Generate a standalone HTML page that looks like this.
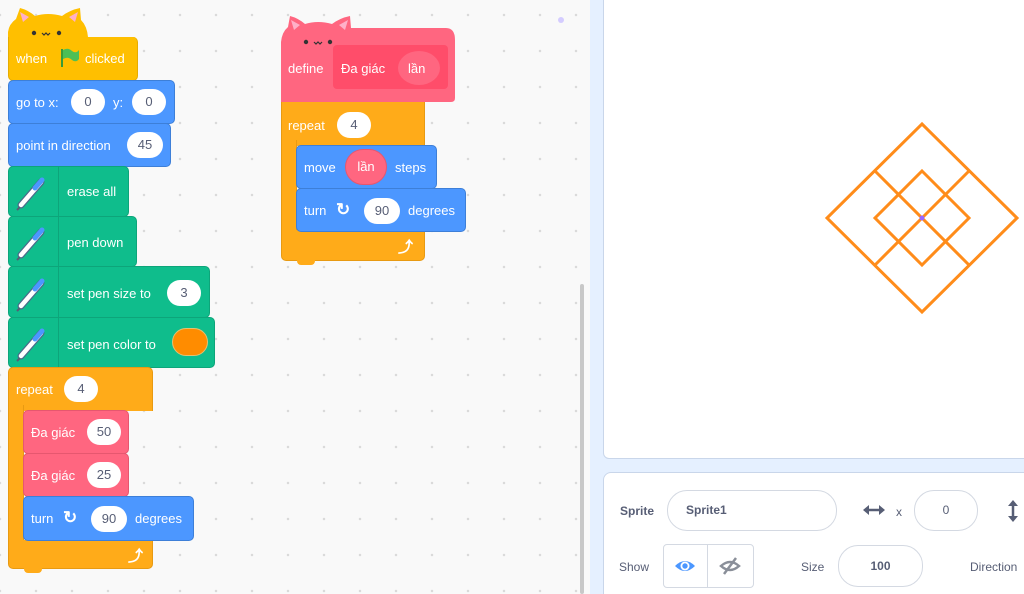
<!DOCTYPE html>
<html style="overflow:hidden;height:594px"><head><meta charset="utf-8">
<style>
*{box-sizing:border-box;margin:0;padding:0}
body{width:1024px;height:594px;overflow:hidden;position:relative;background:#e5f0ff;font-family:"Liberation Sans",sans-serif}
#code{position:absolute;left:0;top:0;width:590px;height:594px;background-color:#f9f9f9;
background-image:radial-gradient(circle,#d9d9d9 1px,transparent 1.5px);background-size:36px 36px;background-position:-18px -3px}
.b{position:absolute;border-radius:5px;color:#fff;font-size:13px;white-space:nowrap}
.in{position:absolute;background:#fff;border-radius:14px;color:#575e75;font-size:13px;text-align:center;transform:translateY(-50%);height:26px;line-height:26px}
.tab{position:absolute;height:5px;width:18px;border-radius:0 0 4px 4px}
.blue{background:#4c97ff;border:1px solid #3d7fd8}
.green{background:#0fbd8c;border:1px solid #0da57a}
.orange{background:#ffab19;border:1px solid #e89a12}
.pink{background:#ff6680;border:1px solid #e6576f}
.yellow{background:#ffbf00;border:1px solid #e6ac00}
.pen{position:absolute;left:0;top:0;width:50px;height:100%;border-right:1px solid #0da57a}
</style></head><body>
<div id="code">
<div style="position:absolute;left:580px;top:284px;width:4px;height:310px;background:#c8c8c8;border-radius:2px"></div>
<div style="position:absolute;left:558px;top:17px;width:6px;height:6px;border-radius:3px;background:#d4ccff"></div>

<svg style="position:absolute;left:0;top:0" width="160" height="50">
<path d="M8 48 L8 32 Q9 24 16 19 L20 8 Q28 10 35 16 Q48 12 62 16 Q70 10 80 8 L81 20 Q87 26 88 37 L133 37 Q137 37 137 41 L137 48Z" fill="#ffbf00"/>
<path d="M20 12 L23 22 L29 17Z M78 12 L75 22 L69 17Z" fill="#ffb0c8"/>
<circle cx="34" cy="33" r="2.2" fill="#333"/><circle cx="59" cy="33" r="2.2" fill="#333"/>
<path d="M42 33 l2 2 l2 -2 l2 2 l2 -2" stroke="#333" stroke-width="1.2" fill="none"/>
</svg>
<div class="b yellow" style="left:8px;top:37px;width:130px;height:44px;border-top:none;border-radius:0 5px 5px 5px">
 <span style="position:absolute;left:7px;top:14px">when</span>
 <svg style="position:absolute;left:50px;top:10px" width="22" height="22"><path d="M3 2 L3 20" stroke="#3a9a3a" stroke-width="2"/><path d="M4 3 Q9 0 13 4 Q17 7 20 3 L20 12 Q17 16 13 13 Q9 9 4 12Z" fill="#4cbf56"/></svg>
 <span style="position:absolute;left:76px;top:14px">clicked</span>
</div>
<div class="b blue" style="left:8px;top:80px;width:167px;height:44px">
 <span style="position:absolute;left:7px;top:14px">go to x:</span>
 <div class="in" style="left:62px;top:21px;width:34px">0</div>
 <span style="position:absolute;left:104px;top:14px">y:</span>
 <div class="in" style="left:123px;top:21px;width:34px">0</div>
</div>
<div class="b blue" style="left:8px;top:123px;width:163px;height:44px">
 <span style="position:absolute;left:7px;top:14px">point in direction</span>
 <div class="in" style="left:118px;top:21px;width:36px">45</div>
</div>
<div class="b green" style="left:8px;top:166px;width:121px;height:51px"><div class="pen"></div><span style="position:absolute;left:58px;top:17px">erase all</span></div>
<div class="b green" style="left:8px;top:216px;width:129px;height:51px"><div class="pen"></div><span style="position:absolute;left:58px;top:18px">pen down</span></div>
<div class="b green" style="left:8px;top:266px;width:202px;height:52px"><div class="pen"></div><span style="position:absolute;left:58px;top:19px">set pen size to</span><div class="in" style="left:158px;top:26px;width:34px">3</div></div>
<div class="b green" style="left:8px;top:317px;width:207px;height:51px"><div class="pen"></div><span style="position:absolute;left:58px;top:19px">set pen color to</span><div style="position:absolute;left:163px;top:10px;width:36px;height:28px;border-radius:14px;background:#ff8c00;border:1px solid #e6c070"></div></div>
<svg style="position:absolute;left:0;top:0;pointer-events:none" width="230" height="400">
<g id="pi">
<path d="M21 205 L41 182" stroke="#4a6a8a" stroke-width="7" stroke-linecap="round"/>
<path d="M21 205 L41 182" stroke="#fff" stroke-width="4.5" stroke-linecap="round"/>
<path d="M35 188 L42 180" stroke="#4c97ff" stroke-width="5" stroke-linecap="round"/>
<path d="M20 207 L17 210" stroke="#575e75" stroke-width="2"/>
</g>
<use href="#pi" y="50"/><use href="#pi" y="101"/><use href="#pi" y="151"/>
</svg>
<div class="orange" style="position:absolute;left:8px;top:367px;width:145px;height:44px;border-radius:5px 5px 0 0;border-bottom:none"></div>
<div class="orange" style="position:absolute;left:8px;top:405px;width:16px;height:140px;border-top:none;border-bottom:none"></div>
<div class="orange" style="position:absolute;left:8px;top:540px;width:145px;height:29px;border-radius:0 0 5px 5px;border-top:none"></div>
<div class="tab" style="left:24px;top:568px;background:#ffab19"></div>
<span style="position:absolute;left:16px;top:382px;color:#fff;font-size:13px">repeat</span>
<div class="in" style="left:64px;top:389px;width:34px">4</div>
<span style="position:absolute;left:128px;top:545px;color:#fff;font-size:15px;font-weight:bold">⤴</span>
<div class="b pink" style="left:23px;top:410px;width:106px;height:44px"><span style="position:absolute;left:7px;top:14px">Đa giác</span><div class="in" style="left:63px;top:21px;width:34px">50</div></div>
<div class="b pink" style="left:23px;top:453px;width:106px;height:44px"><span style="position:absolute;left:7px;top:14px">Đa giác</span><div class="in" style="left:63px;top:21px;width:34px">25</div></div>
<div class="b blue" style="left:23px;top:496px;width:171px;height:45px">
 <span style="position:absolute;left:7px;top:14px">turn</span>
 <span style="position:absolute;left:39px;top:11px;font-size:17px;font-weight:bold">↻</span>
 <div class="in" style="left:67px;top:22px;width:36px">90</div>
 <span style="position:absolute;left:111px;top:14px">degrees</span>
</div>

<svg style="position:absolute;left:270px;top:0" width="200" height="110">
<path d="M11 102 L11 42 Q12 32 18 27 L20 16 Q28 18 35 24 Q48 20 62 24 Q70 18 80 16 L81 28 L176 28 Q185 28 185 40 L185 98 Q185 102 181 102Z" fill="#ff6680"/>
<path d="M21 20 L24 30 L30 25Z M78 20 L75 30 L69 25Z" fill="#ffb0c8"/>
<circle cx="36" cy="42" r="2.2" fill="#333"/><circle cx="60" cy="42" r="2.2" fill="#333"/>
<path d="M44 42 l2 2 l2 -2 l2 2 l2 -2" stroke="#333" stroke-width="1.2" fill="none"/>
<rect x="63" y="45" width="115" height="44" rx="4" fill="#ff4d6a"/>
<ellipse cx="149" cy="68" rx="21" ry="17" fill="#ff6680"/>
</svg>
<span style="position:absolute;left:288px;top:61px;color:#fff;font-size:13px">define</span>
<span style="position:absolute;left:341px;top:61px;color:#fff;font-size:13px">Đa giác</span>
<span style="position:absolute;left:408px;top:61px;color:#fff;font-size:13px">lần</span>

<div class="orange" style="position:absolute;left:281px;top:102px;width:144px;height:44px;border-bottom:none;border-top:none"></div>
<div class="orange" style="position:absolute;left:281px;top:140px;width:16px;height:95px;border-top:none;border-bottom:none"></div>
<div class="orange" style="position:absolute;left:281px;top:230px;width:144px;height:31px;border-radius:0 0 5px 5px;border-top:none"></div>
<div class="tab" style="left:297px;top:260px;background:#ffab19"></div>
<span style="position:absolute;left:288px;top:118px;color:#fff;font-size:13px">repeat</span>
<div class="in" style="left:337px;top:125px;width:34px">4</div>
<span style="position:absolute;left:398px;top:236px;color:#fff;font-size:15px;font-weight:bold">⤴</span>
<div class="b blue" style="left:296px;top:145px;width:141px;height:44px">
 <span style="position:absolute;left:7px;top:14px">move</span>
 <div style="position:absolute;left:48px;top:3px;width:42px;height:36px;border-radius:18px;background:#ff6680;border:1px solid #e6576f;text-align:center;line-height:34px">lần</div>
 <span style="position:absolute;left:98px;top:14px">steps</span>
</div>
<div class="b blue" style="left:296px;top:188px;width:170px;height:44px">
 <span style="position:absolute;left:7px;top:14px">turn</span>
 <span style="position:absolute;left:39px;top:11px;font-size:17px;font-weight:bold">↻</span>
 <div class="in" style="left:67px;top:22px;width:36px">90</div>
 <span style="position:absolute;left:111px;top:14px">degrees</span>
</div>
</div>

<div style="position:absolute;left:603px;top:-6px;width:430px;height:465px;background:#fff;border:1px solid #c9d6ea;border-radius:6px"></div>
<svg style="position:absolute;left:603px;top:0" width="421" height="458">
<g stroke="#ff8c1a" stroke-width="3" fill="none">
<path d="M319 124 L414 218 L319 312 L224 218Z"/>
<path d="M319 171 L366 218 L319 265 L272 218Z"/>
<path d="M272 171 L366 265 M366 171 L272 265"/>
</g>
<circle cx="319" cy="218" r="2.5" fill="#9966ff"/>
</svg>

<div style="position:absolute;left:603px;top:472px;width:440px;height:130px;background:#fff;border:1px solid #c9d6ea;border-radius:8px"></div>
<div style="position:absolute;left:620px;top:504px;font-size:12px;color:#575e75;font-weight:bold">Sprite</div>
<div style="position:absolute;left:667px;top:490px;width:170px;height:41px;border:1px solid #d4d9e2;border-radius:20px;font-size:12px;color:#575e75;font-weight:bold;padding-left:18px;line-height:39px">Sprite1</div>
<svg style="position:absolute;left:862px;top:503px" width="24" height="14"><path d="M4 7 L20 7" stroke="#575e75" stroke-width="2.5"/><path d="M1 7 L7 2 L7 12Z M23 7 L17 2 L17 12Z" fill="#575e75"/></svg>
<div style="position:absolute;left:896px;top:505px;font-size:12px;color:#575e75">x</div>
<div style="position:absolute;left:914px;top:490px;width:64px;height:41px;border:1px solid #d4d9e2;border-radius:20px;font-size:12px;color:#575e75;text-align:center;line-height:39px">0</div>
<svg style="position:absolute;left:1006px;top:499px" width="14" height="24"><path d="M7 4 L7 20" stroke="#575e75" stroke-width="2.5"/><path d="M7 1 L2 7 L12 7Z M7 23 L2 17 L12 17Z" fill="#575e75"/></svg>
<div style="position:absolute;left:619px;top:560px;font-size:12px;color:#575e75">Show</div>
<div style="position:absolute;left:663px;top:544px;width:91px;height:44px;border:1px solid #d4d9e2;border-radius:4px"></div>
<div style="position:absolute;left:707px;top:544px;width:1px;height:44px;background:#d4d9e2"></div>
<svg style="position:absolute;left:674px;top:556px" width="22" height="20"><path d="M1 10 Q11 0 21 10 Q11 20 1 10Z" fill="#4c97ff"/><circle cx="11" cy="10" r="4.5" fill="#fff"/><circle cx="11" cy="10" r="2.7" fill="#4c97ff"/></svg>
<svg style="position:absolute;left:719px;top:556px" width="22" height="20"><path d="M2 10 Q11 2 20 10 Q11 18 2 10Z" fill="none" stroke="#8a8f99" stroke-width="2.5"/><path d="M5 18 L17 2" stroke="#8a8f99" stroke-width="2.5"/></svg>
<div style="position:absolute;left:801px;top:560px;font-size:12px;color:#575e75">Size</div>
<div style="position:absolute;left:838px;top:545px;width:85px;height:42px;border:1px solid #d4d9e2;border-radius:20px;font-size:12px;color:#575e75;font-weight:bold;text-align:center;line-height:40px">100</div>
<div style="position:absolute;left:970px;top:560px;font-size:12px;color:#575e75">Direction</div>
</body></html>
